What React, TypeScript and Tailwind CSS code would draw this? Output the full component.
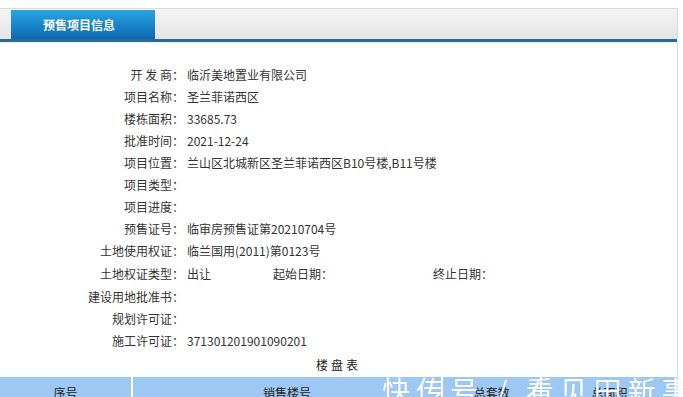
import React from "react";

const rows: { label: string; value?: string }[] = [
  { label: "开 发 商：", value: "临沂美地置业有限公司" },
  { label: "项目名称：", value: "圣兰菲诺西区" },
  { label: "楼栋面积：", value: "33685.73" },
  { label: "批准时间：", value: "2021-12-24" },
  { label: "项目位置：", value: "兰山区北城新区圣兰菲诺西区B10号楼,B11号楼" },
  { label: "项目类型：" },
  { label: "项目进度：" },
  { label: "预售证号：", value: "临审房预售证第20210704号" },
  { label: "土地使用权证：", value: "临兰国用(2011)第0123号" },
];

const rowsAfter: { label: string; value?: string }[] = [
  { label: "建设用地批准书：" },
  { label: "规划许可证：" },
  { label: "施工许可证：", value: "371301201901090201" },
];

const Row = ({ label, value }: { label: string; value?: string }) => (
  <div className="flex h-[22px] items-center">
    <div className="w-[184px] shrink-0 text-right">{label}</div>
    <div className="pl-[3px]">{value}</div>
  </div>
);

const App: React.FC = () => {
  return (
    <div
      className="relative w-[683px] h-[397px] overflow-hidden bg-white text-[12px] text-[#333]"
      style={{ fontFamily: '"Microsoft YaHei", "Noto Sans CJK SC", sans-serif' }}
    >
      <div className="pt-[8px]">
        <div className="w-[678px] h-[389px] border-t border-r border-[#dcdcdc]">
          {/* header bar */}
          <div className="flex h-[30px] bg-gradient-to-b from-[#f5f5f5] to-[#e4e4e4]">
            <div className="ml-[11px] mt-[1px] flex h-[29px] w-[144px] items-center bg-gradient-to-b from-[#2aa5e4] to-[#0b69b1] pl-[32px] text-[12px] font-bold text-white">
              预售项目信息
            </div>
          </div>
          <div className="h-[3px] bg-[#2c6a93]" />
          <div className="h-[1px] bg-[#dff6fd]" />

          {/* info rows */}
          <div className="pt-[21px]">
            {rows.map((r) => (
              <Row key={r.label} label={r.label} value={r.value} />
            ))}
            <div className="flex h-[24px] items-center">
              <div className="w-[184px] shrink-0 text-right">土地权证类型：</div>
              <div className="flex pl-[3px]">
                <span className="w-[86px]">出让</span>
                <span className="w-[160px]">起始日期：</span>
                <span>终止日期：</span>
              </div>
            </div>
            {rowsAfter.map((r) => (
              <Row key={r.label} label={r.label} value={r.value} />
            ))}
          </div>

          {/* 楼盘表 */}
          <div className="flex h-[25px] items-center justify-center tracking-[3px] text-[#222]">
            楼盘表
          </div>
          <div className="flex h-[32px] gap-[2px] bg-white text-[#222]">
            <div className="flex w-[131px] items-center justify-center bg-[#9dc8f3]">序号</div>
            <div className="flex w-[309px] items-center justify-center bg-[#9dc8f3]">销售楼号</div>
            <div className="flex w-[97px] items-center justify-center bg-[#9dc8f3]">总套数</div>
            <div className="flex w-[135px] items-center justify-center bg-[#9dc8f3]">总面积</div>
          </div>
        </div>
      </div>

      {/* watermark */}
      <div
        className="absolute left-[382px] top-[369px] whitespace-nowrap text-[28px] tracking-[6px] text-white"
        style={{ textShadow: "0 0 1px rgba(0,0,0,0.12)" }}
      >
        快传号 / 看见田新事
      </div>
    </div>
  );
};

export default App;
